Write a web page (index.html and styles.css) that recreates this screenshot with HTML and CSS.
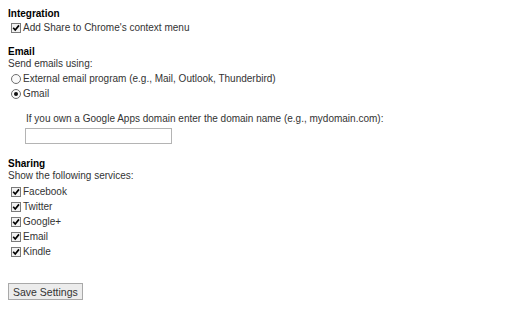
FILE: index.html
```html
<!DOCTYPE html>
<html>
<head>
<meta charset="utf-8">
<link rel="stylesheet" href="styles.css">
</head>
<body>
<section class="group integration">
  <h3 class="title">Integration</h3>
  <label class="opt"><span class="box"><svg viewBox="0 0 10 10" width="10" height="10"><path d="M2.2 4.8 L4.2 7 L8 2.4" fill="none" stroke="#000" stroke-width="1.7"/></svg></span>Add Share to Chrome's context menu</label>
</section>

<section class="group email">
  <h3 class="title">Email</h3>
  <div class="line">Send emails using:</div>
  <label class="opt"><span class="radio"></span>External email program (e.g., Mail, Outlook, Thunderbird)</label>
  <label class="opt"><span class="radio"><span class="dot"></span></span>Gmail</label>
  <div class="domain">
    <div class="line">If you own a Google Apps domain enter the domain name (e.g., mydomain.com):</div>
    <div class="field"></div>
  </div>
</section>

<section class="group sharing">
  <h3 class="title">Sharing</h3>
  <div class="line">Show the following services:</div>
  <label class="opt"><span class="box"><svg viewBox="0 0 10 10" width="10" height="10"><path d="M2.2 4.8 L4.2 7 L8 2.4" fill="none" stroke="#000" stroke-width="1.7"/></svg></span>Facebook</label>
  <label class="opt"><span class="box"><svg viewBox="0 0 10 10" width="10" height="10"><path d="M2.2 4.8 L4.2 7 L8 2.4" fill="none" stroke="#000" stroke-width="1.7"/></svg></span>Twitter</label>
  <label class="opt"><span class="box"><svg viewBox="0 0 10 10" width="10" height="10"><path d="M2.2 4.8 L4.2 7 L8 2.4" fill="none" stroke="#000" stroke-width="1.7"/></svg></span>Google+</label>
  <label class="opt"><span class="box"><svg viewBox="0 0 10 10" width="10" height="10"><path d="M2.2 4.8 L4.2 7 L8 2.4" fill="none" stroke="#000" stroke-width="1.7"/></svg></span>Email</label>
  <label class="opt"><span class="box"><svg viewBox="0 0 10 10" width="10" height="10"><path d="M2.2 4.8 L4.2 7 L8 2.4" fill="none" stroke="#000" stroke-width="1.7"/></svg></span>Kindle</label>
</section>

<div class="actions">
  <button class="save">Save Settings</button>
</div>
</body>
</html>
```

FILE: styles.css
```css
html, body {
  background: #fff;
}
body {
  margin: 8px;
  font-family: "Liberation Sans", Arial, sans-serif;
  font-size: 10px;
  line-height: 12px;
  color: #333;
}
.group {
  display: flex;
  flex-direction: column;
}
.integration {
  margin-bottom: 11px;
}
.email {
  margin-bottom: 14px;
}
.title {
  margin: 0;
  font-size: 10px;
  font-weight: bold;
  color: #000;
  line-height: 12px;
  height: 12px;
}
.line {
  height: 13px;
}
.sharing .line {
  height: 14px;
}
.opt {
  display: flex;
  align-items: center;
  height: 15px;
  padding-left: 3px;
}
.box {
  box-sizing: border-box;
  width: 10px;
  height: 10px;
  border: 1px solid #7a7a7a;
  background: #f2f2f2;
  margin-right: 2px;
  position: relative;
  flex: none;
}
.box svg {
  position: absolute;
  left: -1px;
  top: -1px;
}
.radio {
  box-sizing: border-box;
  width: 10px;
  height: 10px;
  border: 1px solid #6e6e6e;
  border-radius: 50%;
  background: #fafafa;
  margin-right: 2px;
  display: flex;
  align-items: center;
  justify-content: center;
  flex: none;
}
.dot {
  width: 4px;
  height: 4px;
  border-radius: 50%;
  background: #111;
}
.domain {
  padding-left: 18px;
  padding-top: 12px;
}
.field {
  box-sizing: border-box;
  width: 147px;
  height: 16px;
  border: 1px solid #b4b4b4;
  margin-top: 2px;
  margin-left: -1px;
  background: #fff;
}
.actions {
  padding-top: 24px;
}
.save {
  box-sizing: border-box;
  font-family: "Liberation Sans", Arial, sans-serif;
  font-size: 10.5px;
  line-height: 12px;
  color: #333;
  background: #ececec;
  border: 1px solid #a9a9a9;
  padding: 1px 4px;
  height: 17px;
  border-radius: 0;
  margin: 0;
}
```
